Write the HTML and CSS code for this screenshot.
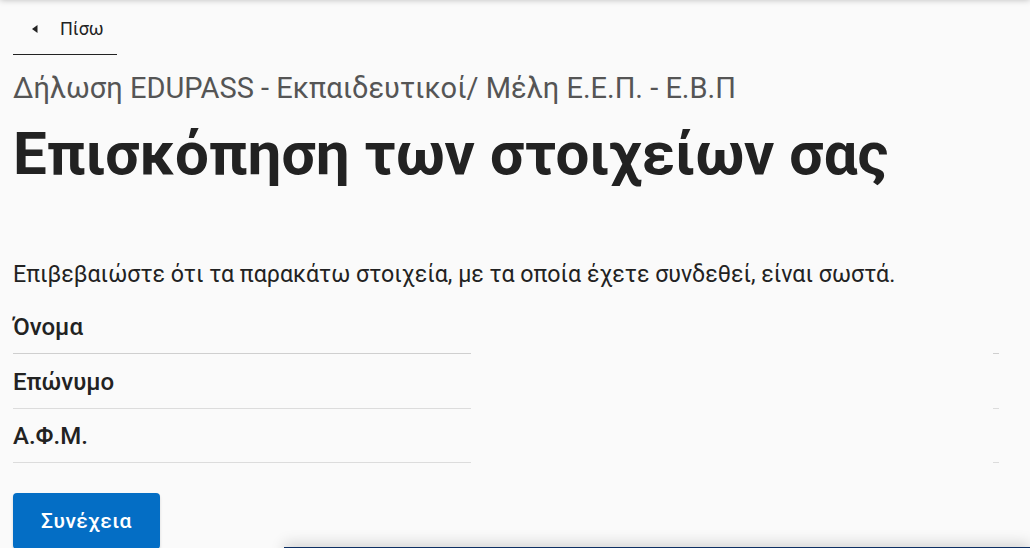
FILE: index.html
```html
<!DOCTYPE html>
<html lang="el">
<head>
<meta charset="utf-8">
<title>Επισκόπηση των στοιχείων σας</title>
<link rel="stylesheet" href="styles.css">
</head>
<body>
<header class="site-header"></header>
<main class="page">
  <nav class="back-nav">
    <a class="back-link" href="#">
      <svg class="back-icon" width="6" height="8" viewBox="0 0 6 8" aria-hidden="true"><path d="M5.5 0 L0 4 L5.5 8 Z" fill="#222"/></svg>
      <span>Πίσω</span>
    </a>
  </nav>
  <p class="caption">Δήλωση EDUPASS - Εκπαιδευτικοί/ Μέλη Ε.Ε.Π. - Ε.Β.Π</p>
  <h1 class="title">Επισκόπηση των στοιχείων σας</h1>
  <p class="intro">Επιβεβαιώστε ότι τα παρακάτω στοιχεία, με τα οποία έχετε συνδεθεί, είναι σωστά.</p>
  <dl class="summary">
    <div class="summary-row first">
      <dt class="key">Όνομα</dt>
      <dd class="value"></dd>
      <dd class="action"></dd>
    </div>
    <div class="summary-row">
      <dt class="key">Επώνυμο</dt>
      <dd class="value"></dd>
      <dd class="action"></dd>
    </div>
    <div class="summary-row last">
      <dt class="key">Α.Φ.Μ.</dt>
      <dd class="value"></dd>
      <dd class="action"></dd>
    </div>
  </dl>
  <button class="btn-primary" type="button">Συνέχεια</button>
</main>
<div class="footer-bar"></div>
</body>
</html>
```
FILE: styles.css
```css
html, body {
  margin: 0;
  padding: 0;
  background: #fafafa;
  font-family: Roboto, "Noto Sans", Arial, sans-serif;
  color: #222;
  overflow: hidden;
  height: 548px;
}

.site-header {
  position: fixed;
  top: -20px;
  left: 0;
  right: 0;
  height: 20px;
  background: #fafafa;
  box-shadow: 0 0 6px rgba(0, 0, 0, 0.25);
  z-index: 2;
}

.page {
  padding: 0 13px;
}

.back-nav {
  display: flex;
  padding-top: 15px;
}

.back-link {
  display: flex;
  align-items: center;
  gap: 22px;
  width: 104px;
  box-sizing: border-box;
  padding: 0 0 11px 19px;
  border-bottom: 1px solid #222;
  color: #222;
  text-decoration: none;
  font-size: 18px;
  font-weight: 400;
  line-height: 28px;
}

.back-icon {
  display: block;
}

.caption {
  margin: 15px 0 0;
  font-size: 29px;
  line-height: 36px;
  color: #555;
  font-weight: 400;
}

.title {
  margin: 12px 0 0;
  font-size: 60px;
  line-height: 72px;
  font-weight: 700;
  color: #222;
}

.intro {
  margin: 68px 0 0;
  font-size: 23.2px;
  line-height: 32px;
  color: #222;
}

.summary {
  margin: 9px 0 0;
  padding: 0 18px 0 0;
}

.summary-row {
  display: grid;
  grid-template-columns: 458px 1fr 6px;
  align-items: end;
}

.key {
  margin: 0;
  padding: 12px 0 10px;
  font-size: 24px;
  font-weight: 500;
  line-height: 32px;
  color: #222;
  border-bottom: 1px solid #dcdcdc;
}

.summary-row.first .key {
  border-bottom-color: #cfcfcf;
}

.summary-row.last .key {
  padding-top: 11px;
}

.value {
  margin: 0;
}

.action {
  margin: 0;
  border-bottom: 1px solid #dcdcdc;
}

.summary-row.first .action {
  border-bottom-color: #cfcfcf;
}

.btn-primary {
  display: block;
  margin-top: 30px;
  padding: 16px 28px;
  background: #046ec5;
  color: #fff;
  border: none;
  border-radius: 4px;
  font-family: Roboto, "Noto Sans", Arial, sans-serif;
  font-size: 21px;
  font-weight: 500;
  line-height: 24px;
  letter-spacing: 0.5px;
  box-shadow: 0 2px 3px rgba(0, 0, 0, 0.15);
}

.footer-bar {
  position: fixed;
  left: 284px;
  right: 0;
  top: 547px;
  height: 40px;
  background: #0d2f63;
  box-shadow: 0 -4px 14px rgba(0, 0, 0, 0.15);
}
```
